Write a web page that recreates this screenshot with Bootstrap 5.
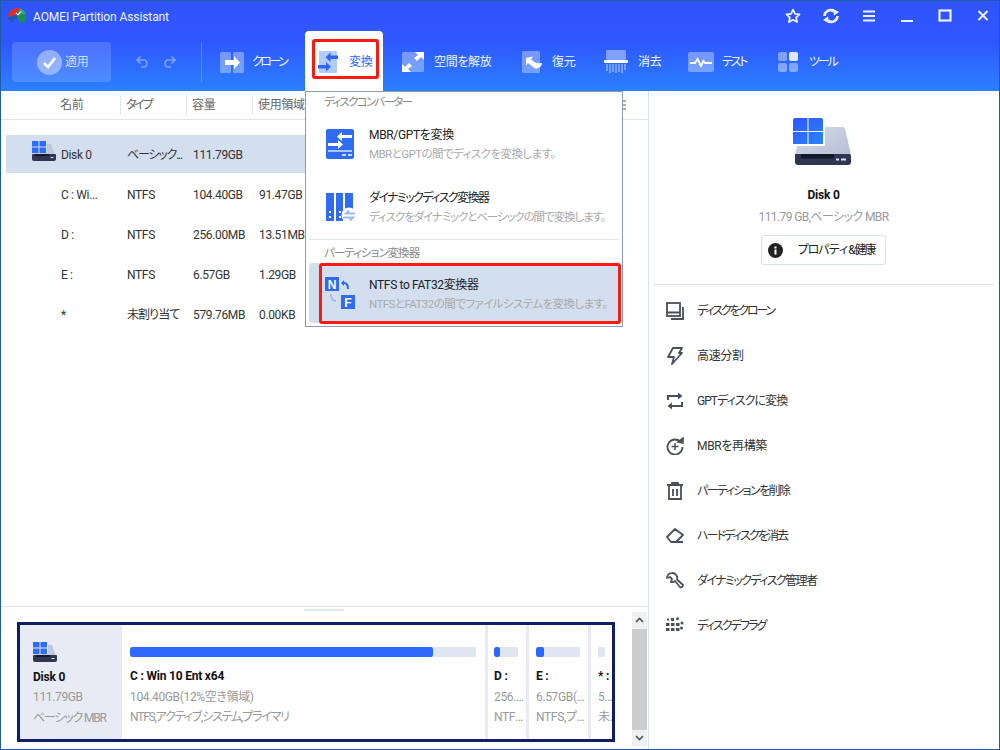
<!DOCTYPE html>
<html lang="ja">
<head>
<meta charset="utf-8">
<title>AOMEI Partition Assistant</title>
<link href="https://cdn.jsdelivr.net/npm/bootstrap@5.3.0/dist/css/bootstrap.min.css" rel="stylesheet">
<style>
html,body{margin:0;height:750px;overflow:hidden;background:#fff}
body{font-family:Roboto,"Noto Sans CJK JP",sans-serif;font-size:12px;line-height:16px;color:#222;font-feature-settings:"palt";letter-spacing:-.35px}
svg{flex:none}
.spa{letter-spacing:-.6px}
.sp1{letter-spacing:-.95px}
.sp2{letter-spacing:-1.2px}
.sp3{letter-spacing:-1.6px}
.sp35{letter-spacing:-1.9px}
.sp4{letter-spacing:-2.2px}
.sp5{letter-spacing:-2.5px}
.win{width:1000px;height:750px;border:1px solid #1d5aa8;position:relative;overflow:hidden;display:flex;flex-direction:column}
.head{height:90px;background:linear-gradient(180deg,#2f54ff 0%,#2f57ff 45%,#2b80ff 100%);color:#fff;flex:none;position:relative}
.titlebar{height:30px;padding-left:7px}
.apptitle{font-size:12px;margin-left:7px;color:#eef3ff;letter-spacing:-.1px;padding-top:1px}
.winbtns{position:absolute;right:-3px;top:0;height:30px}
.wb{width:38px;display:flex;justify-content:center}
.toolbar{height:60px;padding-left:11px;align-items:stretch}
.apply{width:99px;height:40px;margin-top:11px;background:rgba(255,255,255,.15);border-radius:4px;color:#cfdcff;padding-left:25px;gap:3px}
.undo{width:91px;height:40px;margin-top:11px;padding-left:25px;gap:12px;border-right:1px solid rgba(255,255,255,.22)}
.tool{height:60px;gap:8px;color:#eef3ff;font-size:12px;padding-top:2px}
.t-clone{margin-left:18px;width:85px}
.t-conv{width:78px;background:#fff;border-radius:4px 4px 0 0;color:#2f67f6;padding-left:13px;gap:11px;margin-right:19px;position:relative}
.t-free{width:120px;gap:10px}
.t-rest{width:82px;gap:10px}
.t-wipe{width:84px;gap:10px}
.t-test{width:90px;gap:8px}
.t-tool{gap:11px}
.redtab{position:absolute;left:7px;top:8px;width:67px;height:40px;border:3px solid #fb1a12;border-radius:3px}
.main{flex:1;min-height:0}
.leftp{width:648px;border-right:1px solid #d8dfee;flex:none}
.thead{height:29px;border-bottom:1px solid #dfe5f1;color:#666;position:relative;flex:none}
.th{height:20px;padding-left:5px;border-right:1px solid #dfe5f1;margin-top:4px;line-height:21px;width:66px}
.th0{width:120px;padding-left:59px}
.grip{position:absolute;left:621px;top:9px;width:4px;height:12px;background:repeating-linear-gradient(180deg,#a8b0c0 0 2px,transparent 2px 4px)}
.gridarea{flex:1;min-height:0;padding-top:15px;padding-left:5px}
.trow{height:38px;width:610px;margin-bottom:2px;color:#333;padding-top:2px}
.trow.sel{background:#d3deee}
.td{width:66px;white-space:nowrap}
.td0{width:121px;padding-left:55px;position:relative}
.td0 svg{position:absolute;left:26px;top:-6px}
.bottom{height:143px;border-top:1px solid #dfe5f1;position:relative;flex:none}
.splitgrip{position:absolute;left:303px;top:2px;width:40px;height:2px;background:#dfe5f1}
.diskbox{position:absolute;left:16px;top:15px;width:598px;height:120px;border:3px solid #0f1f66;display:flex}
.dinfo{width:102px;background:#e8ebf3;padding:17px 0 0 13px;flex:none}
.bname{font-weight:700;color:#111;font-size:12px;height:16px;line-height:16px;white-space:nowrap;letter-spacing:-.2px}
.bsub{color:#999;height:21px;line-height:21px;white-space:nowrap;overflow:hidden;text-overflow:ellipsis}
.dinfo .bname{margin-top:7px;margin-bottom:2px}
.part{padding:22px 0 0 8px;border-left:3px solid #e8ebf3;overflow:hidden;flex:none}
.p1{width:363px;border-left:0;padding-right:9px}
.p2{width:41px;padding-left:6px;padding-right:1px}
.p3{width:62px;padding-left:7px;padding-right:1px}
.p4{flex:1;min-width:0;padding-left:7px}
.barw{height:10px;background:#dfe6f2;border-radius:2px;overflow:hidden;margin-bottom:11px}
.p2 .barw{margin-right:7px}
.p3 .barw{margin-right:7px}
.p4 .barw{width:7px}
.barf{height:10px;background:#2e67fb;border-radius:2px}
.part .bname{margin-bottom:2px}
.part .bsub{height:20px;line-height:22px}
.scrollb{position:absolute;left:631px;top:5px;width:15px;height:134px;background:#f0f0f0;display:flex;flex-direction:column;justify-content:space-between}
.thumb{position:absolute;left:0;top:17px;width:15px;height:101px;background:#cdcdcd}
.scrollb svg{display:block;margin:5px auto}
.rightp{flex:1;min-width:0}
.dsum{padding-top:27px;height:194px;border-bottom:1px solid #dfe5f1;margin:0 5px 0 4px;text-align:center}
.dsum svg.dk{display:block;margin:0 auto 0 140px}
.dsum .bname{margin-top:22px;height:16px}
.dsub{color:#999;margin-top:6px;height:16px}
.propbtn{width:125px;height:30px;margin:10px auto 0;border:1px solid #d8dfee;border-radius:3px;padding:0 0 0 6px;font-size:12px;color:#222;display:flex;align-items:center;justify-content:flex-start;gap:14px;background:#fff;letter-spacing:-1.6px}
.act{height:45px;padding-left:17px;gap:13px;color:#333}
.actlist{padding-top:3px}
.ddmenu{position:absolute;left:304px;top:90px;width:318px;height:236px;background:#fff;border:1px solid #8f9ab5;z-index:5;padding:0 3px}
.ddcap{color:#888;font-size:11.5px;height:18px;line-height:20px;padding-left:15px}
.dditem{height:60px;padding-left:17px;border-radius:4px}
.slot{width:43px;flex:none;display:flex}
.dtext{padding-top:1px}
.dditem b{font-weight:400;color:#222;display:block;font-size:12px;line-height:17px}
.dditem span{color:#aaa;display:block;font-size:11.5px;line-height:17px;margin-top:2px;white-space:nowrap}
.i1{margin-top:4px}
.i2{margin-top:3px}
.dditem.on{background:#d3deee;position:relative;padding-left:16px;padding-top:3px;margin-top:2px}
.dditem.on .slot{width:44px}
.dditem.on .slot svg{margin-top:-3px}
.dditem span.spa{letter-spacing:-.55px}
.dditem span.sp2{letter-spacing:-1.1px}
.ddcap.sp1{letter-spacing:-.95px}
.ddcap.sp3{letter-spacing:-1.7px}
.ddline{height:1px;background:#dfe5f1;margin:2px 0 3px}
.redbox{position:absolute;left:10px;top:0;width:302px;height:61px;border:3px solid #fb1a12;border-radius:3px}
.iconl{font-family:"Liberation Sans",sans-serif;font-weight:700;font-size:12px;letter-spacing:0}
</style>
</head>
<body>
<div class="win">
  <div class="head">
    <div class="titlebar d-flex align-items-center">
      <svg width="18" height="18" viewBox="0 0 18 18"><path d="M0 10C0 5 4 1 9 1c1 0 2 0 3 .5L9 8 0 10z" fill="#d9302b"/><path d="M0 10l9-2v4H5.500v3C2.500 15 0 13 0 10z" fill="#2257b5"/><path d="M12 1.500c3 1 5 3 6 5.500l-9 1z" fill="#2fae6a"/><path d="M9 8l9-1v4c0 3-3 5-7 5.500V12H9z" fill="#17914f"/><path d="M8 6l2 1.800 3-3.300" fill="none" stroke="#fff" stroke-width="1.100"/></svg>
      <span class="apptitle">AOMEI Partition Assistant</span>
    </div>
    <div class="winbtns d-flex align-items-center">
      <div class="wb"><svg width="16" height="16" viewBox="0 0 16 16"><path d="M8 1.700l2 4.100 4.500.6-3.300 3.100.8 4.500-4-2.200-4 2.200.8-4.500L1.500 6.400 6 5.800z" fill="none" stroke="#eaf0ff" stroke-width="1.800" stroke-linejoin="round"/></svg></div>
      <div class="wb"><svg width="18" height="16" viewBox="0 0 18 16"><path d="M2.500 8a6 6 0 0 1 9-5M15.500 8a6 6 0 0 1-9 5" fill="none" stroke="#eaf0ff" stroke-width="2.600"/><path d="M10.500 .5L17 4l-5 3.500zM7.500 15.500L1 12l5-3.500z" fill="#eaf0ff"/></svg></div>
      <div class="wb"><svg width="14" height="12" viewBox="0 0 14 12"><path d="M1 1.500h12M1 6h12M1 10.500h12" stroke="#eaf0ff" stroke-width="2"/></svg></div>
      <div class="wb"><svg width="14" height="14" viewBox="0 0 14 14"><path d="M1 12h12" stroke="#eaf0ff" stroke-width="2"/></svg></div>
      <div class="wb"><svg width="14" height="14" viewBox="0 0 14 14"><rect x="1.500" y="1.500" width="11" height="10" fill="none" stroke="#eaf0ff" stroke-width="2.200"/></svg></div>
      <div class="wb"><svg width="14" height="14" viewBox="0 0 14 14"><path d="M2.500 2l9 9M11.500 2l-9 9" stroke="#eaf0ff" stroke-width="2"/></svg></div>
    </div>
    <div class="toolbar d-flex">
      <div class="apply d-flex align-items-center"><svg width="25" height="25" viewBox="0 0 25 25"><circle cx="12.500" cy="12.500" r="12.500" fill="#fff" fill-opacity=".4"/><path d="M7 13l4 4 7-9" fill="none" stroke="#fff" stroke-width="2.500"/></svg><span>適用</span></div>
      <div class="undo d-flex align-items-center"><svg width="14" height="12" viewBox="0 0 14 12"><path d="M1 4h8a4 4 0 0 1 0 7H5M4.500 .5L1 4l3.500 3.500" fill="none" stroke="#7f9fff" stroke-width="1.600"/></svg><svg width="14" height="12" viewBox="0 0 14 12"><path d="M13 4H5a4 4 0 0 0 0 7h4M9.500 .5L13 4 9.500 7.500" fill="none" stroke="#7f9fff" stroke-width="1.600"/></svg></div>
      <div class="tool t-clone d-flex align-items-center"><svg width="24" height="21" viewBox="0 0 24 21"><rect width="11" height="21" rx="1.500" fill="#fff" fill-opacity=".35"/><rect x="13" width="11" height="21" rx="1.500" fill="#fff" fill-opacity=".35"/><path d="M5 8h9V4l6 6.500L14 17v-4H5z" fill="#fff"/></svg><span class="sp5">クローン</span></div>
      <div class="tool t-conv d-flex align-items-center"><svg width="20" height="22" viewBox="0 0 20 22"><rect x="1" width="18" height="22" rx="1" fill="#b1cbfb"/><path d="M20 4.500v3.500H12.500v3L7.500 6.200 12.500 1.500v3z" fill="#2f67f6"/><path d="M0 14h8v-3l5 4.700-5 4.800v-3H0z" fill="#2f67f6"/></svg><span>変換</span><div class="redtab"></div></div>
      <div class="tool t-free d-flex align-items-center"><svg width="22" height="20" viewBox="0 0 22 20"><rect width="22" height="20" rx="1.500" fill="#fff" fill-opacity=".35"/><path d="M13 0h9v8l-3-3-4 4-3-3 4-3zM9 20H0v-8l3 3 4-4 3 3-4 3z" fill="#fff"/></svg><span>空間を解放</span></div>
      <div class="tool t-rest d-flex align-items-center"><svg width="20" height="22" viewBox="0 0 20 22"><rect width="18" height="22" rx="1.500" fill="#fff" fill-opacity=".35"/><path d="M4 7l7-1.500-2 3 4 3c2 1 4 1 7 .5 0 3-3 6-7 5.500L6 12l-2 2.500z" fill="#fff"/></svg><span>復元</span></div>
      <div class="tool t-wipe d-flex align-items-center"><svg width="24" height="24" viewBox="0 0 24 24"><rect x="2" width="20" height="10" rx="1.500" fill="#fff" fill-opacity=".4"/><rect y="10" width="24" height="3" rx="1" fill="#fff"/><path d="M3 14v7M6 14v9M9 14v8M12 14v9M15 14v8M18 14v9M21 14v6" stroke="#fff" stroke-opacity=".45" stroke-width="1.500"/></svg><span>消去</span></div>
      <div class="tool t-test d-flex align-items-center"><svg width="26" height="20" viewBox="0 0 26 20"><rect width="26" height="20" rx="2" fill="#fff" fill-opacity=".35"/><path d="M2 11h5l2.500-4 3.500 7 2.500-5 1.500 2h7" fill="none" stroke="#fff" stroke-width="1.800"/></svg><span class="sp4">テスト</span></div>
      <div class="tool t-tool d-flex align-items-center"><svg width="20" height="20" viewBox="0 0 20 20"><rect width="9" height="9" rx="2" fill="#fff" fill-opacity=".4"/><rect x="11" width="9" height="9" rx="2" fill="#fff" fill-opacity=".85"/><rect y="11" width="9" height="9" rx="2" fill="#fff" fill-opacity=".4"/><rect x="11" y="11" width="9" height="9" rx="2" fill="#fff" fill-opacity=".4"/></svg><span class="sp4">ツール</span></div>
    </div>
  </div>

  <div class="main d-flex">
    <div class="leftp d-flex flex-column">
      <div class="thead d-flex">
        <div class="th th0">名前</div><div class="th sp4">タイプ</div><div class="th">容量</div><div class="th">使用領域</div>
        <div class="grip"></div>
      </div>
      <div class="gridarea">
        <div class="trow sel d-flex align-items-center"><div class="td td0"><svg width="24" height="20" viewBox="0 0 24 20"><path d="M4 3h15l4 11H1z" fill="#c0c8dc"/><path d="M1 13h22a1 1 0 0 1 1 1v4a2 2 0 0 1-2 2H2a2 2 0 0 1-2-2v-4a1 1 0 0 1 1-1z" fill="#2f3650"/><rect x="3" y="13" width="14" height="2" fill="#14182a"/><rect x="18.500" y="16" width="3" height="1" fill="#cfe0ff"/><rect x="-1" y="-1" width="16" height="13" fill="#d3deee"/><path d="M0 0h6.500v5.500H0zM7.500 0H14v5.500H7.500zM0 6.500h6.500V12H0zM7.500 6.500H14V12H7.500z" fill="#2e6bff"/></svg>Disk 0</div><div class="td sp2">ベーシック...</div><div class="td">111.79GB</div></div>
        <div class="trow d-flex align-items-center"><div class="td td0">C : Wi...</div><div class="td">NTFS</div><div class="td">104.40GB</div><div class="td">91.47GB</div></div>
        <div class="trow d-flex align-items-center"><div class="td td0">D :</div><div class="td">NTFS</div><div class="td">256.00MB</div><div class="td">13.51MB</div></div>
        <div class="trow d-flex align-items-center"><div class="td td0">E :</div><div class="td">NTFS</div><div class="td">6.57GB</div><div class="td">1.29GB</div></div>
        <div class="trow d-flex align-items-center"><div class="td td0">*</div><div class="td sp1">未割り当て</div><div class="td">579.76MB</div><div class="td">0.00KB</div></div>
      </div>
      <div class="bottom">
        <div class="splitgrip"></div>
        <div class="diskbox">
          <div class="dinfo">
            <svg class="d-block" width="24" height="20" viewBox="0 0 24 20"><path d="M4 3h15l4 11H1z" fill="#c0c8dc"/><path d="M1 13h22a1 1 0 0 1 1 1v4a2 2 0 0 1-2 2H2a2 2 0 0 1-2-2v-4a1 1 0 0 1 1-1z" fill="#2f3650"/><rect x="3" y="13" width="14" height="2" fill="#14182a"/><rect x="18.500" y="16" width="3" height="1" fill="#cfe0ff"/><rect x="-1" y="-1" width="16" height="13" fill="#e8ebf3"/><path d="M0 0h6.500v5.500H0zM7.500 0H14v5.500H7.500zM0 6.500h6.500V12H0zM7.500 6.500H14V12H7.500z" fill="#2e6bff"/></svg>
            <div class="bname">Disk 0</div>
            <div class="bsub">111.79GB</div>
            <div class="bsub sp2">ベーシック MBR</div>
          </div>
          <div class="part p1"><div class="barw"><div class="barf" style="width:87.6%"></div></div><div class="bname">C : Win 10 Ent x64</div><div class="bsub">104.40GB(12%空き領域)</div><div class="bsub sp2">NTFS,アクティブ,システム,プライマリ</div></div>
          <div class="part p2"><div class="barw"><div class="barf" style="width:25%"></div></div><div class="bname">D :</div><div class="bsub">256.00MB</div><div class="bsub">NTFS,プライマリ</div></div>
          <div class="part p3"><div class="barw"><div class="barf" style="width:18%"></div></div><div class="bname">E :</div><div class="bsub">6.57GB(20%空き)</div><div class="bsub">NTFS,プライマリ</div></div>
          <div class="part p4"><div class="barw"></div><div class="bname">* :</div><div class="bsub">579.76MB</div><div class="bsub">未割り当て</div></div>
        </div>
        <div class="scrollb">
          <svg width="9" height="6" viewBox="0 0 9 6"><path d="M1 5l3.500-3.500L8 5" fill="none" stroke="#555" stroke-width="1.700"/></svg>
          <div class="thumb"></div>
          <svg width="9" height="6" viewBox="0 0 9 6"><path d="M1 1l3.500 3.500L8 1" fill="none" stroke="#555" stroke-width="1.700"/></svg>
        </div>
      </div>
    </div>

    <div class="rightp d-flex flex-column">
      <div class="dsum">
        <svg class="dk" width="58" height="47" viewBox="0 0 58 47"><defs><linearGradient id="g1" x1="0" y1="0" x2="1" y2="1"><stop offset="0" stop-color="#d5dbe8"/><stop offset="1" stop-color="#b5bfd6"/></linearGradient><linearGradient id="g2" x1="0" y1="0" x2="1" y2="1"><stop offset="0" stop-color="#2e55ff"/><stop offset="1" stop-color="#2b85ff"/></linearGradient></defs><path d="M8 9h42a2 2 0 0 1 2 1.500L58 37H2z" fill="url(#g1)"/><path d="M2 36h54a2 2 0 0 1 2 2v6a3 3 0 0 1-3 3H5a3 3 0 0 1-3-3z" fill="#2e3650"/><rect x="8" y="36" width="33" height="4.500" rx="1" fill="#14182b"/><rect x="43" y="40.500" width="3" height="2" fill="#cfe0ff"/><rect x="48" y="40.500" width="5" height="2" fill="#cfe0ff"/><rect x="-1" y="-1" width="33" height="29" fill="#fff"/><path d="M0 2a2 2 0 0 1 2-2h12.500v13H0zM15.500 0H28a2 2 0 0 1 2 2v11H15.500zM0 14h14.500v12H0zM15.500 14H30v12H15.500z" fill="url(#g2)"/></svg>
        <div class="bname">Disk 0</div>
        <div class="dsub spa">111.79 GB,ベーシック MBR</div>
        <button class="btn propbtn" type="button"><svg width="15" height="15" viewBox="0 0 15 15"><circle cx="7.500" cy="7.500" r="7.500" fill="#222"/><rect x="6.500" y="6.500" width="2" height="5" fill="#fff"/><rect x="6.500" y="3.500" width="2" height="2" fill="#fff"/></svg><span>プロパティ&amp;健康</span></button>
      </div>
      <div class="actlist">
        <div class="act d-flex align-items-center"><svg width="18" height="18" viewBox="0 0 18 18"><rect x="1" y="1" width="13" height="13" fill="none" stroke="#4a4f5a" stroke-width="1.800"/><path d="M1 10.500h13M17 5v12H5" fill="none" stroke="#4a4f5a" stroke-width="1.800"/></svg><span class="sp4">ディスクをクローン</span></div>
        <div class="act d-flex align-items-center"><svg width="18" height="18" viewBox="0 0 18 18"><path d="M7 1h9l-3 5h3L6 17l2-7H2l5-9z" fill="none" stroke="#4a4f5a" stroke-width="1.800" stroke-linejoin="round"/></svg><span>高速分割</span></div>
        <div class="act d-flex align-items-center"><svg width="18" height="18" viewBox="0 0 18 18"><path d="M2 8V4h11M16 10v4H5" fill="none" stroke="#4a4f5a" stroke-width="2"/><path d="M12 .5L16.500 4 12 7.500zM6 10.500L1.500 14 6 17.500z" fill="#4a4f5a"/></svg><span class="sp1">GPTディスクに変換</span></div>
        <div class="act d-flex align-items-center"><svg width="18" height="18" viewBox="0 0 18 18"><path d="M15 5.500A7.500 7.500 0 1 0 16.500 10" fill="none" stroke="#4a4f5a" stroke-width="1.800"/><path d="M12 5l5 1V1zM5.500 9.500h7M9 6v7" stroke="#4a4f5a" fill="#4a4f5a" stroke-width="1.500"/></svg><span>MBRを再構築</span></div>
        <div class="act d-flex align-items-center"><svg width="18" height="18" viewBox="0 0 18 18"><path d="M1 3h16M6 3V1h6v2M3 3v14h12V3M7 7v7M11 7v7" fill="none" stroke="#4a4f5a" stroke-width="1.800"/></svg><span class="sp3">パーティションを削除</span></div>
        <div class="act d-flex align-items-center"><svg width="18" height="18" viewBox="0 0 18 18"><path d="M1 10l8-8 8 6-7 7H5zM5.500 15H17" fill="none" stroke="#4a4f5a" stroke-width="1.800" stroke-linejoin="round"/></svg><span class="sp35">ハードディスクを消去</span></div>
        <div class="act d-flex align-items-center"><svg width="18" height="18" viewBox="0 0 18 18"><path d="M6 1a5 5 0 0 0-5 5l3-1 2 2-1 3a5 5 0 0 0 4-1l5 6c1 1 3-.5 3-2L11 7.500A5 5 0 0 0 6 1z" fill="none" stroke="#4a4f5a" stroke-width="1.800" stroke-linejoin="round"/></svg><span class="sp3">ダイナミックディスク管理者</span></div>
        <div class="act d-flex align-items-center"><svg width="18" height="18" viewBox="0 0 18 18"><path d="M5 1h3v3H5zM0 6h3.500v3H0zM5 6h3.500v3H5zM10 6h3.500v3H10zM0 11h3.500v3H0zM5 11h3.500v3H5zM10 11h3.500v3H10zM1 1.500h2v2H1z" fill="#4a4f5a"/><circle cx="11.500" cy="1.800" r="1.500" fill="#4a4f5a"/><circle cx="16" cy="6" r="1.500" fill="#4a4f5a"/><circle cx="15.500" cy="11" r="1.500" fill="#4a4f5a"/></svg><span class="sp35">ディスクデフラグ</span></div>
      </div>
    </div>
  </div>

  <div class="ddmenu">
    <div class="ddcap sp3">ディスクコンバーター</div>
    <div class="dditem i1 d-flex align-items-center"><div class="slot"><svg width="28" height="30" viewBox="0 0 28 30"><rect width="28" height="30" rx="2" fill="#2f6bf3"/><path d="M26 6H16V3l-5 4.500 5 4.500V9h10zM2 14h10v-3l5 4.500L12 20v-3H2z" fill="#fff"/><path d="M2 22h24" stroke="#fff" stroke-width="1.200"/><path d="M16 26h4M22 26h4" stroke="#fff" stroke-width="1.500"/></svg></div><div class="dtext"><b>MBR/GPTを変換</b><span class="spa">MBRとGPTの間でディスクを変換します。</span></div></div>
    <div class="dditem i2 d-flex align-items-center"><div class="slot"><svg width="30" height="29" viewBox="0 0 30 29"><rect width="8" height="28" fill="#2f6bf3"/><rect x="10" width="7" height="28" fill="#2f6bf3"/><rect x="19" width="8" height="18" fill="#2f6bf3"/><path d="M3 18h2v2H3zM3 23h2v2H3zM13 18h2v2h-2zM13 23h2v2h-2z" fill="#fff"/><circle cx="23" cy="22" r="7.500" fill="#fff"/><path d="M29 20.500H20l3-3M17 24.500h10l-3 3" fill="none" stroke="#9db9ef" stroke-width="2"/></svg></div><div class="dtext"><b class="sp3">ダイナミックディスク変換器</b><span class="sp2">ディスクをダイナミックとベーシックの間で変換します。</span></div></div>
    <div class="ddline"></div>
    <div class="ddcap sp1">パーティション変換器</div>
    <div class="dditem on d-flex align-items-center"><div class="slot"><svg width="30" height="32" viewBox="0 0 30 32"><rect width="14" height="14" fill="#2f6bf3"/><rect x="16" y="18" width="14" height="14" fill="#2f6bf3"/><text class="iconl" x="7" y="11.500" text-anchor="middle" fill="#fff">N</text><text class="iconl" x="23" y="29.500" text-anchor="middle" fill="#fff">F</text><path d="M16 6l3-3v2c3 0 5 2 5 7h-2c0-3-1-5-3-5v2z" fill="#2f6bf3"/><path d="M6 17c0 4 1 7 5 7" fill="none" stroke="#9db9ef" stroke-width="1.800"/></svg></div><div class="dtext"><b>NTFS to FAT32変換器</b><span class="spa">NTFSとFAT32の間でファイルシステムを変換します。</span></div><div class="redbox"></div></div>
  </div>
</div>
<script src="https://cdn.jsdelivr.net/npm/bootstrap@5.3.0/dist/js/bootstrap.bundle.min.js"></script>
</body>
</html>
